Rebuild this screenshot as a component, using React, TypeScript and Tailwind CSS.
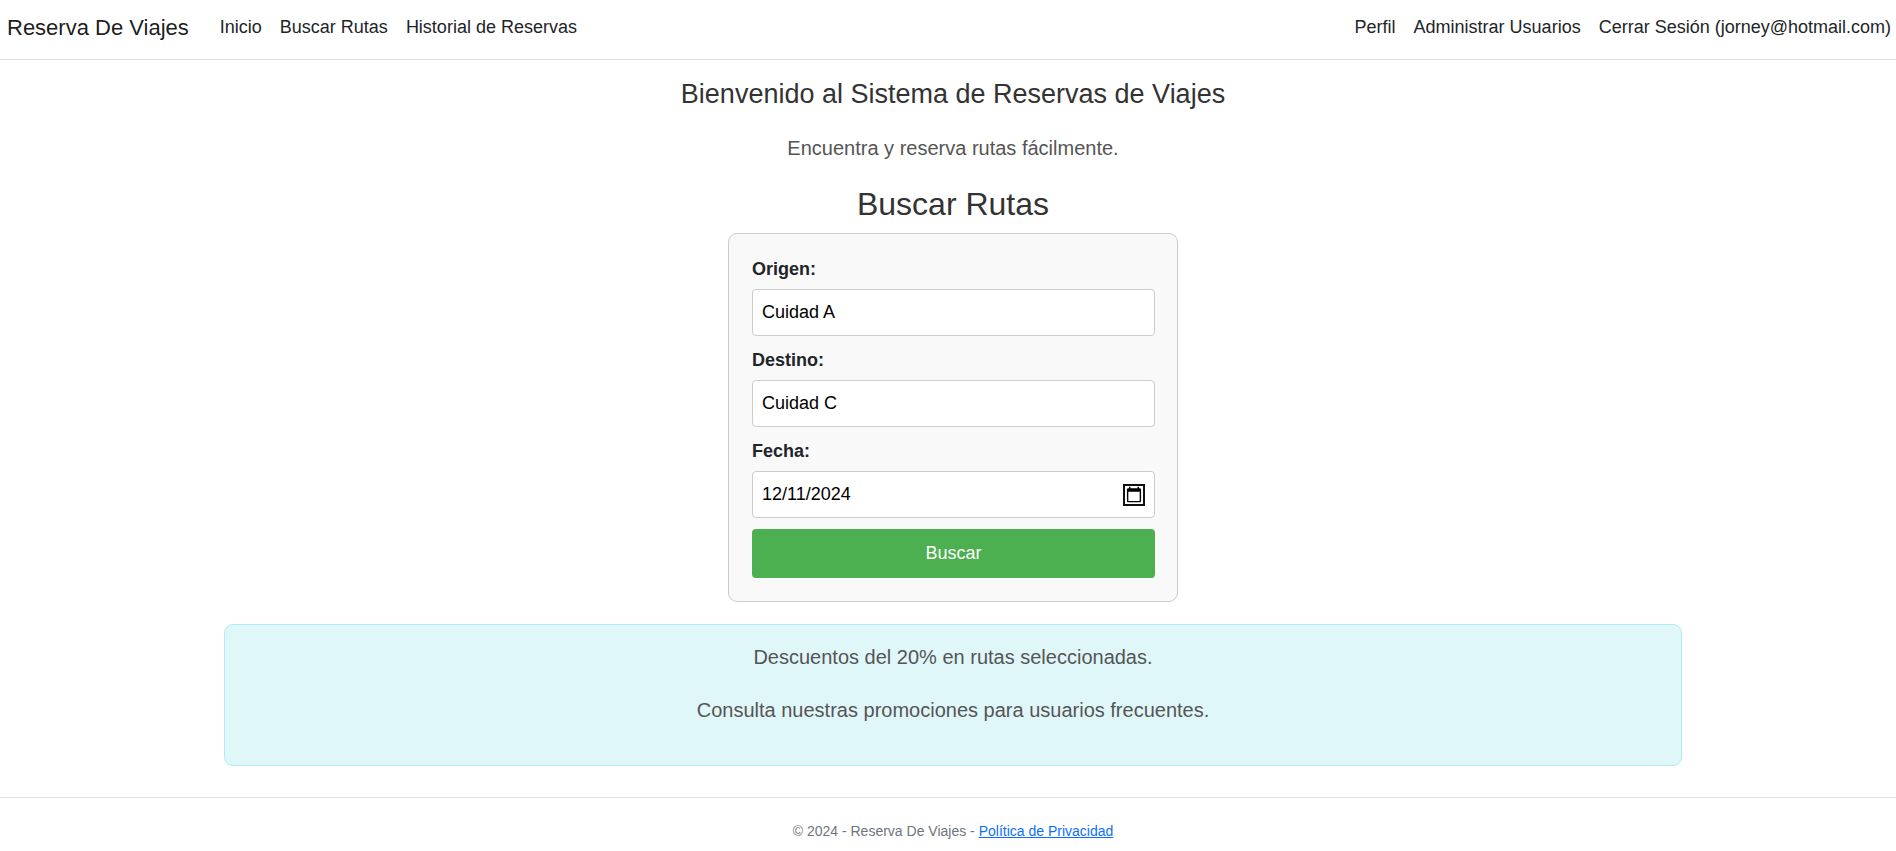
const leftLinks = ["Inicio", "Buscar Rutas", "Historial de Reservas"];
const rightLinks = ["Perfil", "Administrar Usuarios", "Cerrar Sesión (jorney@hotmail.com)"];

function NavLinks({ items }: { items: string[] }) {
  return (
    <ul className="flex flex-wrap">
      {items.map((item) => (
        <li key={item}>
          <a href="#" className="block px-[9px] py-2 text-[18px] leading-[27px] text-[#212529]">
            {item}
          </a>
        </li>
      ))}
    </ul>
  );
}

const inputClass =
  "mb-[11px] block h-[47px] w-full rounded-[4px] border border-[#ccc] bg-white px-[9px] text-[18px] leading-[27px] text-black outline-none";
const dateFieldClass =
  "[&::-webkit-datetime-edit-month-field]:px-0 [&::-webkit-datetime-edit-day-field]:px-0 [&::-webkit-datetime-edit-year-field]:px-0";
const datePickerClass =
  "[&::-webkit-calendar-picker-indicator]:outline-2 [&::-webkit-calendar-picker-indicator]:-outline-offset-2 [&::-webkit-calendar-picker-indicator]:outline-solid [&::-webkit-calendar-picker-indicator]:outline-[#101010]";
const labelClass = "mb-[6px] block text-[18px] leading-[27px] font-bold text-[#212529]";

function SearchForm() {
  return (
    <form
      className="w-full max-w-[450px] rounded-[9px] border border-[#ccc] bg-[#f9f9f9] pt-[22px] pr-[22px] pb-[23px] pl-[23px]"
      onSubmit={(e) => e.preventDefault()}
    >
      <label htmlFor="origen" className={labelClass}>Origen:</label>
      <input id="origen" type="text" defaultValue="Cuidad A" className={inputClass} />
      <label htmlFor="destino" className={labelClass}>Destino:</label>
      <input id="destino" type="text" defaultValue="Cuidad C" className={inputClass} />
      <label htmlFor="fecha" className={labelClass}>Fecha:</label>
      <input
        id="fecha"
        type="date"
        defaultValue="2024-12-11"
        className={`${inputClass} ${dateFieldClass} ${datePickerClass}`}
      />
      <button type="submit" className="block h-[49px] w-full rounded-[4px] bg-[#4caf50] text-[18px] leading-[27px] text-white">
        Buscar
      </button>
    </form>
  );
}

export default function App() {
  return (
    <div className="flex min-h-screen flex-col bg-white font-['Liberation_Sans',Arial,sans-serif] text-[#212529]">
      <header className="border-b border-[#dee2e6]">
        <nav className="flex flex-wrap items-center justify-between pt-[6px] pb-[10px] pl-[7px]">
          <div className="flex flex-wrap items-center gap-[22px]">
            <a href="#" className="text-[22px] leading-[34px] text-black/90">Reserva De Viajes</a>
            <NavLinks items={leftLinks} />
          </div>
          <div className="-mr-[4px]">
            <NavLinks items={rightLinks} />
          </div>
        </nav>
      </header>

      <main className="flex flex-1 flex-col items-center pt-[18px] pl-[10px] text-center">
        <h1 className="text-[27px] leading-[32px] text-[#333]">Bienvenido al Sistema de Reservas de Viajes</h1>
        <p className="mt-[23px] text-[20px] leading-[30px] text-[#555]">Encuentra y reserva rutas fácilmente.</p>
        <h2 className="mt-[22px] mb-[10px] text-[32px] leading-[38px] text-[#333]">Buscar Rutas</h2>
        <div className="flex w-full justify-center text-left">
          <SearchForm />
        </div>
        <section className="mt-[22px] w-full max-w-[1458px] rounded-[9px] border border-[#b2ebf2] bg-[#e0f7fa] px-[18px] pt-[17px] pb-[40px] text-[20px] leading-[30px] text-[#555]">
          <p>Descuentos del 20% en rutas seleccionadas.</p>
          <p className="mt-[23px]">Consulta nuestras promociones para usuarios frecuentes.</p>
        </section>
      </main>

      <footer className="border-t border-[#dee2e6] pt-[23px] pb-[9px] pl-[10px] text-center text-[14px] leading-[21px] text-[#6c757d]">
        © 2024 - Reserva De Viajes -{" "}
        <a href="#" className="text-[#0d6efd] underline">Política de Privacidad</a>
      </footer>
    </div>
  );
}
